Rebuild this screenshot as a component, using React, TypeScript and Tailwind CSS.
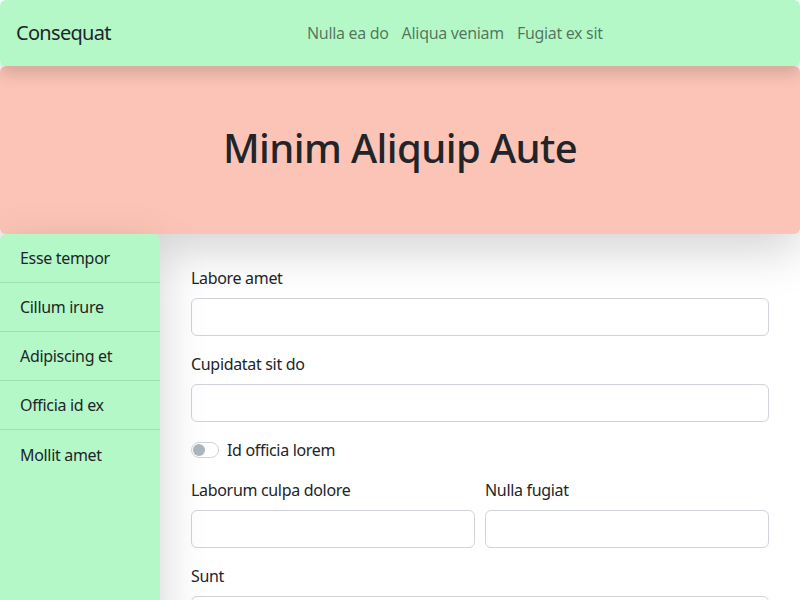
import { useState } from "react";

const NAV = ["Nulla ea do", "Aliqua veniam", "Fugiat ex sit"];
const SIDE = ["Esse tempor", "Cillum irure", "Adipiscing et", "Officia id ex", "Mollit amet"];

function Field({ label }: { label: string }) {
  return (
    <div className="mb-4">
      <label className="block mb-2 leading-6">{label}</label>
      <input className="block w-full h-[38px] rounded-md border border-[#ced4da] bg-white px-3 outline-none" />
    </div>
  );
}

export default function App() {
  const [on, setOn] = useState(false);

  return (
    <div className="min-h-[600px] bg-white text-[#212529] font-['Segoe_UI','Noto_Sans',sans-serif] text-base tracking-[-0.02em]">
      {/* Navbar */}
      <nav className="relative z-30 h-[66px] bg-[#b4f8c8] rounded-md shadow-[0_0.5rem_1rem_rgba(0,0,0,0.15)] flex items-center px-4">
        <div className="text-xl w-[291px] tracking-[-0.035em]">Consequat</div>
        <div className="flex gap-[13px] text-black/55">
          {NAV.map((n) => (
            <a key={n} href="#" className="leading-6">
              {n}
            </a>
          ))}
        </div>
      </nav>

      {/* Hero */}
      <header className="relative z-20 h-[168px] bg-[#fbc4b6] rounded-md shadow-[0_1rem_3rem_rgba(0,0,0,0.175)] flex items-center justify-center">
        <h1 className="text-[40px] font-medium leading-tight pb-1 tracking-[-0.015em]">Minim Aliquip Aute</h1>
      </header>

      <div className="flex">
        {/* Sidebar */}
        <aside className="relative z-40 w-40 min-h-[366px] bg-[#b4f8c8] rounded-md shadow-[0_1rem_3rem_rgba(0,0,0,0.175)]">
          {SIDE.map((s, i) => (
            <div
              key={s}
              className={`h-[49px] px-5 flex items-center ${i < SIDE.length - 1 ? "border-b border-black/10" : ""}`}
            >
              {s}
            </div>
          ))}
        </aside>

        {/* Form */}
        <main className="flex-1 px-[31px] pt-8">
          <Field label="Labore amet" />
          <Field label="Cupidatat sit do" />

          <div className="mb-4 flex items-center h-6 gap-2">
            <button
              onClick={() => setOn(!on)}
              className={`w-7 h-4 rounded-full border flex items-center px-[1px] ${on ? "bg-[#0d6efd] border-[#0d6efd] justify-end" : "bg-white border-[#ced4da] justify-start"}`}
            >
              <span className={`w-3 h-3 rounded-full ${on ? "bg-white" : "bg-[#adb5bd]"}`} />
            </button>
            <span>Id officia lorem</span>
          </div>

          <div className="grid grid-cols-2 gap-x-[10px]">
            <Field label="Laborum culpa dolore" />
            <Field label="Nulla fugiat" />
          </div>

          <Field label="Sunt" />
        </main>
      </div>
    </div>
  );
}
